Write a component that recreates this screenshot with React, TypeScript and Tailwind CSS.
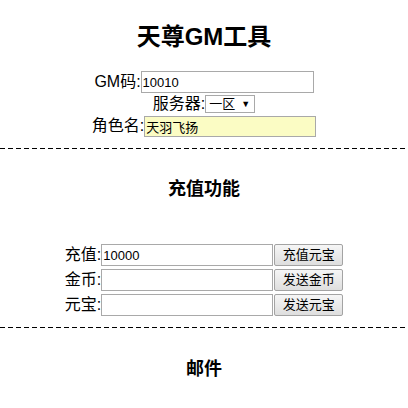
import React from 'react'

const font = 'font-["Liberation_Sans","Noto_Sans_CJK_SC",sans-serif]'

function Dashed() {
  return <div className="h-px w-full bg-[repeating-linear-gradient(90deg,#000_0_5px,transparent_5px_8px)]" />
}

function ChargeRow({ label, value, action }: { label: string; value: string; action: string }) {
  return (
    <div className="flex h-[22px] items-center justify-center">
      <span className="text-[16px] leading-[22px]">{label}:</span>
      <input
        readOnly
        value={value}
        className="h-[22px] w-[172px] border border-[#a9a9a9] bg-white px-[1px] text-[13px] text-black outline-none"
      />
      <button className="ml-[1px] h-[22px] w-[69px] rounded-[2px] border border-[#a3a3a3] bg-[linear-gradient(#f6f6f6,#dedede)] text-[13px] leading-[20px]">
        {action}
      </button>
    </div>
  )
}

export default function App() {
  return (
    <div className={`${font} w-[408px] bg-white text-black`}>
      <h1 className="pt-[24px] text-center text-[24px] font-bold leading-[26px]">天尊GM工具</h1>

      <div className="mt-[21px] flex flex-col items-center">
        <div className="flex h-[22px] items-center">
          <span className="text-[16px] leading-[22px]">GM码:</span>
          <input
            readOnly
            value="10010"
            className="h-[22px] w-[173px] border border-[#a9a9a9] bg-white px-[1px] text-[13px] outline-none"
          />
        </div>
        <div className="flex h-[22px] items-center">
          <span className="text-[16px] leading-[22px]">服务器:</span>
          <span className="flex h-[18px] w-[50px] items-center border border-[#a9a9a9] bg-white pl-[3px] text-[13px] leading-[16px]">
            <span>一区</span>
            <span className="ml-[6px] text-[9px]">▼</span>
          </span>
        </div>
        <div className="flex h-[22px] items-center">
          <span className="text-[16px] leading-[22px]">角色名:</span>
          <input
            readOnly
            value="天羽飞扬"
            className="h-[21px] w-[172px] border border-[#a9a9a9] bg-[#fbfcc4] px-[1px] text-[13px] outline-none"
          />
        </div>
      </div>

      <div className="mt-[11px]">
        <Dashed />
      </div>

      <h2 className="mt-[28px] text-center text-[18px] font-bold leading-[24px]">充值功能</h2>

      <div className="mt-[43px] flex flex-col gap-[3px]">
        <ChargeRow label="充值" value="10000" action="充值元宝" />
        <ChargeRow label="金币" value="" action="发送金币" />
        <ChargeRow label="元宝" value="" action="发送元宝" />
      </div>

      <div className="mt-[11px]">
        <Dashed />
      </div>

      <h2 className="mt-[29px] text-center text-[18px] font-bold leading-[24px]">邮件</h2>
    </div>
  )
}
